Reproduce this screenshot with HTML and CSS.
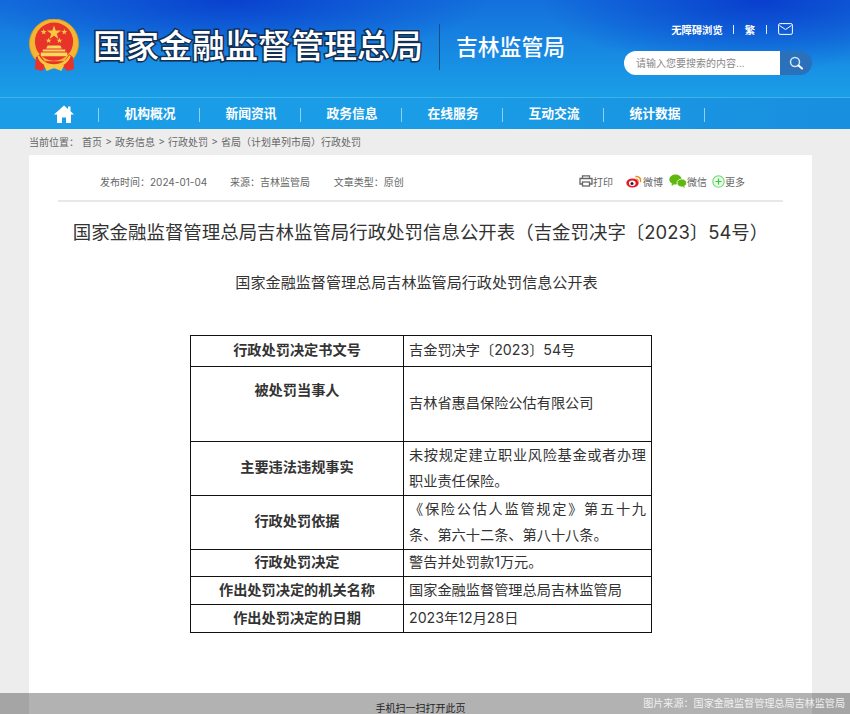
FILE: index.html
```html
<!DOCTYPE html>
<html lang="zh-CN">
<head>
<meta charset="utf-8">
<title>国家金融监督管理总局吉林监管局行政处罚信息公开表</title>
<link rel="stylesheet" href="styles.css">
</head>
<body>
<header class="top">
  <div class="brand">
    <svg class="emblem" viewBox="0 0 52 56" width="51" height="55">
      <circle cx="25.5" cy="25" r="25" fill="#f2b632"/>
      <circle cx="25.5" cy="25" r="25" fill="none" stroke="#e09a20" stroke-width="1"/>
      <circle cx="25.5" cy="23" r="19.5" fill="#e8332a"/>
      <polygon fill="#f7c840" points="25.5,6.5 27.3,11.8 32.8,11.8 28.4,15 30,20.3 25.5,17.1 21,20.3 22.6,15 18.2,11.8 23.7,11.8"/>
      <polygon fill="#f7c840" points="15,10 15.8,12.2 18,12.2 16.2,13.6 16.9,15.8 15,14.4 13.1,15.8 13.8,13.6 12,12.2 14.2,12.2"/>
      <polygon fill="#f7c840" points="36,10 36.8,12.2 39,12.2 37.2,13.6 37.9,15.8 36,14.4 34.1,15.8 34.8,13.6 33,12.2 35.2,12.2"/>
      <polygon fill="#f7c840" points="20,19 20.8,21 23,21 21.2,22.4 21.9,24.5 20,23.2 18.1,24.5 18.8,22.4 17,21 19.2,21"/>
      <polygon fill="#f7c840" points="31,19 31.8,21 34,21 32.2,22.4 32.9,24.5 31,23.2 29.1,24.5 29.8,22.4 28,21 30.2,21"/>
      <path fill="#f9d65c" d="M19 27h13l1.500 3H17.500zM14 31h23v2H14zM12 34h27v4H12z"/>
      <path fill="#e8332a" d="M7 39l4-3 5 7h20l5-7 4 3 1 12-7 2-3-3H16l-3 3-7-2z"/>
      <path fill="#f7c840" d="M10 37c4 7 9 9 15.500 9S37 44 41 37l1.500 1c-3 8-9 11-17 11S11 46 8.500 38zM15 47h21l-3 6-7.500-3-7.500 3z"/>
    </svg>
    <div class="site-name">国家金融监督管理总局</div>
    <div class="brand-rule"></div>
    <div class="local-name">吉林监管局</div>
  </div>
  <div class="tools">
    <div class="links">
      <span>无障碍浏览</span><i></i><span>繁</span><i></i>
      <svg class="mail" viewBox="0 0 15 12" width="15" height="12"><rect x=".6" y=".6" width="13.800" height="10.800" rx="1.500" fill="none" stroke="#fff" stroke-width="1"/><path d="M1.500 2.500l6 4 6-4" fill="none" stroke="#fff" stroke-width="1"/></svg>
    </div>
    <div class="search">
      <div class="search-input">请输入您要搜索的内容...</div>
      <div class="search-btn">
        <svg viewBox="0 0 14 14" width="14" height="14"><circle cx="6" cy="6" r="4.500" fill="none" stroke="#d5e6f6" stroke-width="1.500"/><path d="M9.500 9.500l3.500 3" stroke="#fff" stroke-width="2" stroke-linecap="round"/></svg>
      </div>
    </div>
  </div>
</header>
<nav class="nav">
  <a class="nav-item home"><svg viewBox="0 0 20 18" width="20" height="18"><path fill="#fff" d="M10 .5L0 9.500h3V18h5v-5.500h4V18h5V9.500h3L16.500 6.300V1.500h-2.500v2.600z"/></svg></a>
  <a class="nav-item">机构概况</a>
  <a class="nav-item">新闻资讯</a>
  <a class="nav-item">政务信息</a>
  <a class="nav-item">在线服务</a>
  <a class="nav-item">互动交流</a>
  <a class="nav-item">统计数据</a>
</nav>
<div class="crumbs">
  <span class="crumb-label">当前位置：</span>
  <span>首页</span><b>&gt;</b><span>政务信息</span><b>&gt;</b><span>行政处罚</span><b>&gt;</b><span>省局（计划单列市局）行政处罚</span>
</div>
<main class="card">
  <div class="meta">
    <div class="meta-left">
      <span class="m1">发布时间：2024-01-04</span>
      <span class="m2">来源：吉林监管局</span>
      <span>文章类型：原创</span>
    </div>
    <div class="share">
      <span class="s-print"><svg viewBox="0 0 14 12" width="14" height="12"><path d="M3.500 3V.8h7V3M3 9H1V3.500h12V9h-2" fill="none" stroke="#666" stroke-width="1.300"/><rect x="3.500" y="7" width="7" height="4" fill="none" stroke="#666" stroke-width="1.300"/></svg>打印</span>
      <span class="s-weibo"><svg viewBox="0 0 16 14" width="16" height="14"><ellipse cx="6.500" cy="9" rx="6.200" ry="4.500" fill="#e6162d"/><ellipse cx="6.300" cy="9.200" rx="3.300" ry="2.700" fill="#fff"/><circle cx="6" cy="9.500" r="1.500" fill="#222"/><path d="M10 2.500a4 4 0 0 1 4.500 5" fill="none" stroke="#f08a1d" stroke-width="1.500" stroke-linecap="round"/><path d="M10 5a1.800 1.800 0 0 1 2 2" fill="none" stroke="#f08a1d" stroke-width="1.200" stroke-linecap="round"/></svg>微博</span>
      <span class="s-wechat"><svg viewBox="0 0 18 14" width="18" height="14"><ellipse cx="6.500" cy="5.500" rx="6.200" ry="5" fill="#5fb80e"/><path d="M3 9l-.5 3 3-2z" fill="#5fb80e"/><ellipse cx="12.800" cy="9" rx="4.800" ry="4" fill="#5fb80e" stroke="#fff" stroke-width=".8"/><path d="M15 12l1 2-2.500-1.200z" fill="#5fb80e"/></svg>微信</span>
      <span class="s-more"><svg viewBox="0 0 13 13" width="13" height="13"><circle cx="6.500" cy="6.500" r="5.700" fill="#e9fbe9" stroke="#6ddc6d" stroke-width="1.100"/><path d="M6.500 3.500v6M3.500 6.500h6" stroke="#3cc83c" stroke-width="1.200"/></svg>更多</span>
    </div>
  </div>
  <h1 class="title">国家金融监督管理总局吉林监管局行政处罚信息公开表（吉金罚决字〔2023〕54号）</h1>
  <h2 class="subtitle">国家金融监督管理总局吉林监管局行政处罚信息公开表</h2>
  <table class="info">
    <tbody>
      <tr class="r1"><th>行政处罚决定书文号</th><td>吉金罚决字〔2023〕54号</td></tr>
      <tr class="r2"><th class="th-up">被处罚当事人</th><td>吉林省惠昌保险公估有限公司</td></tr>
      <tr class="r3"><th>主要违法违规事实</th><td>未按规定建立职业风险基金或者办理职业责任保险。</td></tr>
      <tr class="r4"><th>行政处罚依据</th><td>《保险公估人监管规定》第五十九条、第六十二条、第八十八条。</td></tr>
      <tr class="r5"><th>行政处罚决定</th><td>警告并处罚款1万元。</td></tr>
      <tr class="r6"><th>作出处罚决定的机关名称</th><td>国家金融监督管理总局吉林监管局</td></tr>
      <tr class="r7"><th>作出处罚决定的日期</th><td>2023年12月28日</td></tr>
    </tbody>
  </table>
  <p class="scan">手机扫一扫打开此页</p>
</main>
<div class="credit">图片来源：国家金融监督管理总局吉林监管局</div>
</body>
</html>
```
FILE: styles.css
```css
* { box-sizing: border-box; }
html, body { margin: 0; height: 714px; overflow: hidden; }
body {
  position: relative;
  display: flex;
  flex-direction: column;
  background: #ededed;
  font-family: Inter, "Noto Sans CJK SC", "Liberation Sans", sans-serif;
  color: #333;
}
.top {
  height: 97px;
  flex: none;
  display: flex;
  justify-content: space-between;
  padding: 0 38px 0 29px;
  background:
    radial-gradient(ellipse 260px 60px at 230px 0, rgba(8,60,205,.9), rgba(8,60,205,0)),
    radial-gradient(ellipse 220px 70px at 760px 0, rgba(8,60,205,.95), rgba(8,60,205,0)),
    linear-gradient(180deg, #1470dc 0%, #1a9fe7 100%);
}
.brand { display: flex; align-items: center; height: 92px; }
.emblem { flex: none; margin-right: 13px; }
.site-name {
  font-size: 33px;
  line-height: 40px;
  font-weight: 500;
  color: #fff;
  white-space: nowrap;
  -webkit-text-stroke: 3px #122f55;
  paint-order: stroke fill;
  margin-top: -1px;
}
.brand-rule { width: 1px; height: 46px; background: #134f86; margin: 2px 16px 0 16px; }
.local-name { font-size: 21.800px; line-height: 30px; font-weight: 500; color: #fff; white-space: nowrap; margin-top: 2px; }
.tools { display: flex; flex-direction: column; align-items: flex-end; }
.links { display: flex; align-items: center; height: 16px; margin-top: 21px; margin-right: 19px; color: #fff; font-size: 10.300px; font-weight: 700; }
.links i { width: 1px; height: 9px; background: #dbeeff; margin: 0 10.500px; }
.mail { margin-left: 1px; }
.search { display: flex; margin-top: 14px; height: 24px; width: 188px; }
.search-input { width: 156px; background: #fff; border-radius: 12px 0 0 12px; font-size: 10px; line-height: 24px; padding-left: 12px; color: #888; }
.search-btn { width: 32px; background: #2a70bb; border-radius: 0 12px 12px 0; display: flex; align-items: center; justify-content: center; }
.nav {
  height: 32px;
  flex: none;
  display: flex;
  padding-left: 29px;
  border-top: 1px solid #3db1ec;
  background: linear-gradient(90deg, #1a9de6 0%, #1a9de6 50%, #198fdf 100%);
}
.nav-item {
  width: 101px;
  height: 31px;
  padding: 0 0 2px 1px;
  display: flex;
  align-items: center;
  justify-content: center;
  color: #fff;
  font-size: 12.800px;
  font-weight: 700;
  position: relative;
}
.nav-item::after { content: ""; position: absolute; right: 0; top: 10px; height: 14px; width: 1px; background: #8fd0f5; }
.home { width: 70px; padding: 0; }
.crumbs {
  height: 26px;
  flex: none;
  padding: 0 0 2px 29px;
  display: flex;
  align-items: center;
  font-size: 10px;
  color: #666;
}
.crumb-label { width: 53px; }
.crumbs b { font-weight: 400; width: 13px; text-align: center; }
.card {
  flex: 1;
  margin: 0 38px 0 29px;
  background: #fff;
  padding: 0 29px;
  min-height: 0;
}
.meta {
  height: 47px;
  display: flex;
  align-items: center;
  justify-content: space-between;
  padding: 7px 38px 0 42px;
  font-size: 10px;
  color: #666;
  border-bottom: 2px solid #e8e8e8;
}
.m1 { margin-right: 20px; }
.m2 { margin-right: 21px; }
.share { display: flex; align-items: center; }
.share span { display: flex; align-items: center; }
.s-print { margin-right: 13px; margin-left: -2px; }
.s-weibo svg { margin-right: 1px; }
.s-weibo { margin-right: 6px; }
.s-wechat { margin-right: 5px; }
.title {
  margin: 16px -16px 0;
  font-size: 18.450px;
  line-height: 28px;
  font-weight: 400;
  text-align: center;
  white-space: nowrap;
  color: #333;
}
.subtitle {
  margin: 25px 0 0;
  padding-right: 8px;
  font-size: 15.100px;
  line-height: 24px;
  font-weight: 400;
  text-align: center;
  color: #333;
}
.info {
  border-collapse: collapse;
  table-layout: fixed;
  width: 462px;
  margin: 40px 0 0 132px;
  font-size: 14.200px;
  line-height: 22px;
}
.info th, .info td { border: 1px solid #111; padding: 0 5px 2px; font-weight: 400; text-align: left; }
.info td { text-align: justify; }
.info th { width: 213px; font-weight: 700; text-align: center; }
.th-up { vertical-align: top; padding-top: 12px !important; }
.r1 { height: 31px; }
.r2 { height: 75px; }
.r3, .r4 { height: 54px; }
.r3 td, .r4 td { line-height: 26px; padding-bottom: 1px; }
.r3 th, .r4 th { padding-bottom: 4px; }
.r5 { height: 27px; }
.r6 { height: 28px; }
.r7 { height: 28px; }
.scan { margin: 60px 0 0; font-size: 10px; line-height: 30px; text-align: center; color: #333; }
.credit {
  position: absolute;
  left: 0;
  right: 0;
  bottom: 0;
  height: 21px;
  padding-right: 5px;
  background: rgba(0,0,0,.3);
  color: #f0f0f0;
  font-size: 10.100px;
  line-height: 20px;
  text-align: right;
}
```
